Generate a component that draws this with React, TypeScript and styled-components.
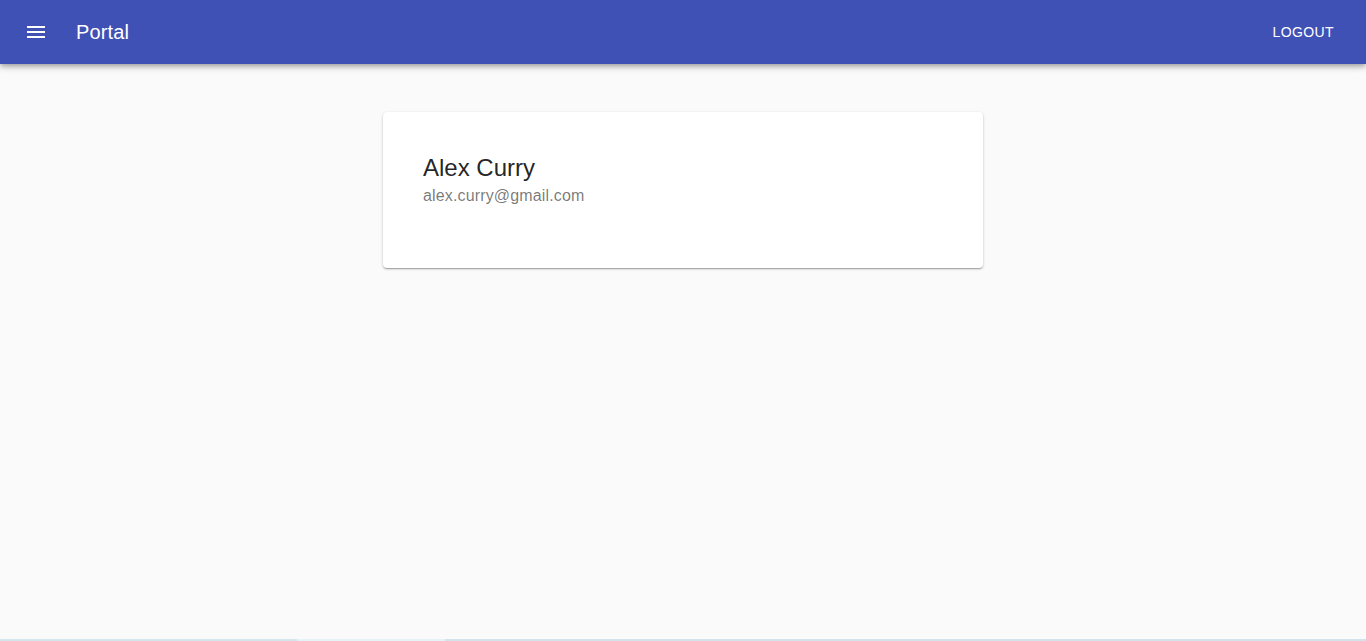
import React from "react";
import styled, { createGlobalStyle } from "styled-components";

const Global = createGlobalStyle`
  html, body { margin: 0; padding: 0; background: #fafafa; }
  body { font-family: "Liberation Sans", Arial, sans-serif; min-height: 641px; }
`;

const Page = styled.div`
  min-height: 641px;
  display: flex;
  flex-direction: column;
  background: #fafafa;
`;

const AppBar = styled.header`
  height: 64px;
  background: #3f51b5;
  color: #fff;
  display: flex;
  align-items: center;
  padding: 0 24px 0 14px;
  box-shadow: 0px 2px 4px -1px rgba(0,0,0,0.2), 0px 4px 5px 0px rgba(0,0,0,0.14), 0px 1px 10px 0px rgba(0,0,0,0.12);
  position: relative;
  z-index: 2;
`;

const IconButton = styled.button`
  width: 44px;
  height: 44px;
  border: none;
  background: transparent;
  color: #fff;
  display: flex;
  align-items: center;
  justify-content: center;
  padding: 0;
  margin-right: 18px;
  cursor: pointer;
`;

const Title = styled.h1`
  margin: 0;
  font-size: 20px;
  font-weight: 400;
  line-height: 1.6;
  letter-spacing: 0.15px;
  flex: 1;
`;

const TextButton = styled.button`
  border: none;
  background: transparent;
  color: #fff;
  font-family: "Liberation Sans", Arial, sans-serif;
  font-size: 14px;
  letter-spacing: 0.4px;
  text-transform: uppercase;
  padding: 6px 8px;
  cursor: pointer;
`;

const Main = styled.main`
  flex: 1;
  display: flex;
  justify-content: center;
  padding-top: 48px;
`;

const Card = styled.section`
  width: 600px;
  height: 156px;
  box-sizing: border-box;
  background: #fff;
  border-radius: 4px;
  padding: 40px 40px;
  box-shadow: 0px 1px 3px 0px rgba(0,0,0,0.2), 0px 1px 1px 0px rgba(0,0,0,0.14), 0px 2px 1px -1px rgba(0,0,0,0.12);
`;

const Name = styled.h2`
  margin: 0;
  font-size: 24px;
  font-weight: 400;
  line-height: 32px;
  color: rgba(0,0,0,0.87);
`;

const Email = styled.p`
  margin: 0;
  font-size: 16px;
  line-height: 24px;
  letter-spacing: 0.15px;
  color: rgba(0,0,0,0.54);
`;

const BottomBar = styled.div`
  height: 2px;
  display: flex;
`;

const Segment = styled.div<{ $w: string; $c: string }>`
  width: ${(p) => p.$w};
  flex: ${(p) => (p.$w === "auto" ? 1 : "none")};
  background: ${(p) => p.$c};
`;

export default function App() {
  return (
    <Page>
      <Global />
      <AppBar>
        <IconButton aria-label="menu">
          <svg width="24" height="24" viewBox="0 0 24 24" fill="#fff">
            <path d="M3 18h18v-2H3v2zm0-5h18v-2H3v2zm0-7v2h18V6H3z" />
          </svg>
        </IconButton>
        <Title>Portal</Title>
        <TextButton>Logout</TextButton>
      </AppBar>
      <Main>
        <Card>
          <Name>Alex Curry</Name>
          <Email>alex.curry@gmail.com</Email>
        </Card>
      </Main>
      <BottomBar>
        <Segment $w="297px" $c="#d3e6ee" />
        <Segment $w="148px" $c="#e6f3f6" />
        <Segment $w="auto" $c="#d3e3ec" />
      </BottomBar>
    </Page>
  );
}
